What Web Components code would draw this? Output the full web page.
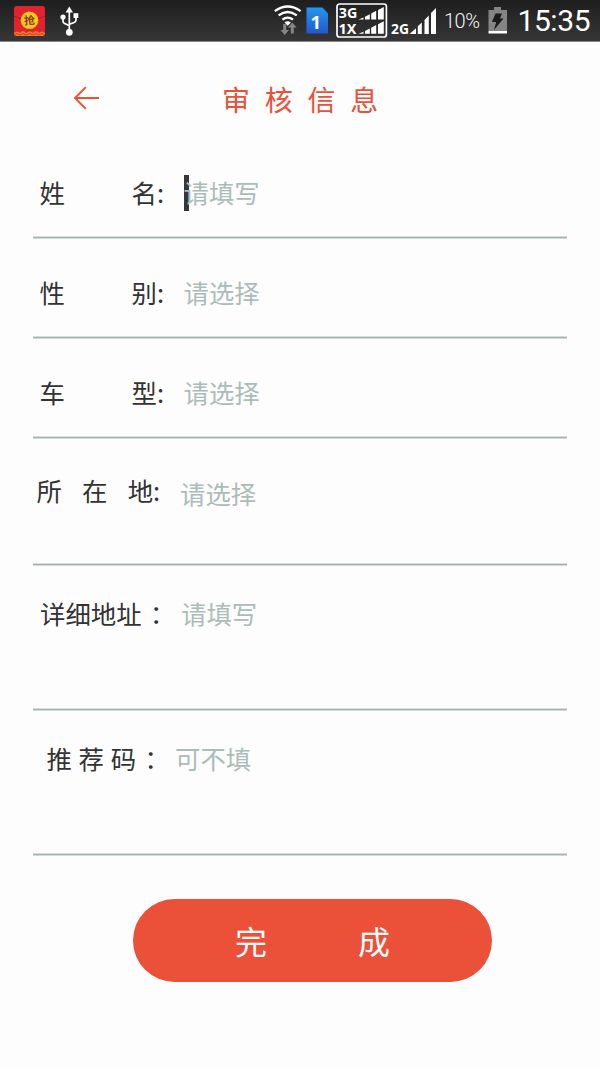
<!DOCTYPE html>
<html lang="zh-CN">
<head>
<meta charset="utf-8">
<title>审核信息</title>
<style>
html,body{margin:0;padding:0;background:#fdfdfd}
body{font-family:"Noto Sans CJK SC","Noto Sans",sans-serif;color:#333}
</style>
</head>
<body>
<audit-page></audit-page>
<script>
const define = (name, html) => {
  const t = document.createElement('template');
  t.innerHTML = html;
  customElements.define(name, class extends HTMLElement {
    constructor() {
      super();
      this.attachShadow({ mode: 'open' }).append(t.content.cloneNode(true));
    }
  });
};

define('status-bar', `
<style>
:host{display:flex;box-sizing:border-box;height:42px;background:linear-gradient(#1e1e1e,#363636);border-bottom:1px solid #888;color:#fff}
svg{display:block;width:600px;height:41px}
.b{font:700 13.5px "Noto Sans",sans-serif}
.r{font-family:Roboto,sans-serif}
</style>
<svg viewBox="0 0 600 41" fill="#fff">
  <defs><linearGradient id="sim" x1="0" y1="0" x2="0" y2="1"><stop stop-color="#2497ed"/><stop offset="1" stop-color="#2158cf"/></linearGradient>
  <clipPath id="env"><rect x="14" y="6" width="31" height="30" rx="3"/></clipPath></defs>
  <g clip-path="url(#env)">
    <rect x="14" y="6" width="31" height="30" fill="#e2232f"/>
    <path d="M14 16 Q30 24 45 16" stroke="#b91824" fill="none"/>
    <path d="M14 33q3-3 6 0q3-4 6 0q4-3 7 0q3-4 6 0q3-3 6 0v4H14z" fill="#ef7a2c"/>
    <path d="M14 35q3-3 6 0q3-3 6 0q4-3 7 0q3-3 6 0q3-3 6 0" stroke="#d63a24" fill="none"/>
  </g>
  <circle cx="29.5" cy="20.3" r="8.8" fill="#fbcb18"/>
  <text x="24" y="24.5" font-size="11" font-weight="700" fill="#8b3b12" transform="rotate(-4 29 20)">抢</text>
  <g stroke="#fff" stroke-width="1.7" fill="none"><path d="M69.3 11V32M63 17v4.2q0 1.8 1.8 2.4l4.5 2.2M76 16v4q0 1.8-1.8 2.5l-4.9 1.8"/></g>
  <path d="M69.3 6.5 73 12.5H65.6z"/><circle cx="69.3" cy="32.3" r="3.4"/><circle cx="63" cy="17" r="2.6"/><rect x="73.5" y="13.2" width="4.8" height="4.8"/>
  <g fill="none" stroke="#fff" stroke-width="2.3"><path d="M274.8 11.1q12.9-9.2 25.8 0M278.6 15.4q9.1-6.8 18.2 0M282.4 19.7q5.3-4.2 10.6 0"/></g>
  <path d="M284.5 22.5q3.2-2.6 6.4 0l-3.2 3.2z"/>
  <g fill="#858585"><path d="M283.2 24h3v6h2.8l-4.3 5-4.3-5h2.8zM290.8 33.5h3v-6h2.8l-4.3-5-4.3 5h2.8z"/></g>
  <path d="M306.5 7.5H322.5L328 13.5V33.5H306.5z" fill="url(#sim)"/>
  <text x="310.5" y="28.7" font-family="Noto Sans" font-weight="700" font-size="18.5">1</text>
  <rect x="337" y="4" width="49.4" height="33" rx="2.5" fill="none" stroke="#fff" stroke-width="1.7"/>
  <text class="b" x="338.8" y="17.5" textLength="18.5" lengthAdjust="spacingAndGlyphs">3G</text>
  <text class="b" x="338.5" y="34" textLength="18" lengthAdjust="spacingAndGlyphs">1X</text>
  <path id="mini" d="M358.5 19.5 363.5 17.4V19.5zM365 16.7 369.8 14.2V19.5H365zM371.2 13.5 376.2 10.8V19.5H371.2zM378 10 383.8 7V19.5H378z"/>
  <use href="#mini" y="14.3"/>
  <text class="b" x="391" y="34" textLength="18" lengthAdjust="spacingAndGlyphs">2G</text>
  <path d="M409.5 34 416 28.2V34zM417.8 26.3 421.8 22.5V34H417.8zM424.5 20 428.8 15.5V34H424.5zM431 13 436 8V34H431z"/>
  <text class="r" x="444" y="28.3" font-size="20" font-weight="300" fill="#f4f4f4" textLength="36">10%</text>
  <path d="M494 7h7v3h6v21H488.5V10H494z" fill="#858585"/><rect x="488.5" y="31" width="18.5" height="2.5"/>
  <path d="M495.5 13.5h6.5l-2 5h3.5l-9.5 11.5 2.2-8H492z" fill="#1b1b1b"/>
  <text class="r" x="517.5" y="31" font-size="30" textLength="73">15:35</text>
</svg>`);

define('page-header', `
<style>
:host{display:grid;grid-template-columns:222px 1fr;height:97px;box-sizing:border-box;padding-top:35px;color:#eb5038}
svg{margin:8px 0 0 73px;width:28px;height:26px}
h1{margin:0;font:400 28px/44px "Noto Sans CJK SC",sans-serif;word-spacing:8.5px;white-space:nowrap}
</style>
<svg viewBox="0 0 28 26" fill="none" stroke="currentColor" stroke-width="1.9"><path d="M26 13H2M12.8 2.2 2 13 12.8 23.8"/></svg>
<h1><slot></slot></h1>`);

define('form-row', `
<style>
:host{display:flex;box-sizing:border-box;height:var(--h,100px);margin:0 33px;background:linear-gradient(#d6dddc 1px,#a3b3b1 1px 2px,#d2dad9 2px) bottom/100% 3px no-repeat;padding-top:var(--t,35px);font-size:25.4px;line-height:36px;white-space:nowrap}
.label{box-sizing:border-box;width:var(--w,150.5px);padding-left:var(--l,6.5px);word-spacing:var(--gap,61px)}
.value{color:#acbcb9;margin-top:var(--dy,0);isolation:isolate}
</style>
<div class="label"><slot></slot></div><div class="value"><slot name="value"></slot></div>`);

define('text-caret', `
<style>:host{display:inline-block;width:5px;height:36px;margin-right:-5px;background:#333739;position:relative;top:1px;z-index:-1;vertical-align:top}</style>`);

define('full-colon', `
<style>:host{display:inline-block;font-family:"Noto Sans CJK TC",sans-serif;margin:1px 0 0 2px;vertical-align:top}</style><span lang="zh-TW"><slot></slot></span>`);

define('submit-button', `
<style>
:host{display:block;margin:42.5px 0 0 133.3px;width:358.4px}
button{display:block;width:100%;height:83.5px;border:0;border-radius:42px;padding:0 0 0;background:#eb5038;color:#fff;font:400 32px/44px "Noto Sans CJK SC",sans-serif;word-spacing:84px}
</style>
<button><slot></slot></button>`);

define('audit-page', `
<style>
:host{display:flex;flex-direction:column;height:1067px;overflow:hidden;background:#fdfdfd}
.place{--h:127px;--t:33px;--l:3.5px;--w:147px;--gap:14.5px;--dy:3px}
.addr{--h:145px;--t:29px;--l:7px;--w:148px}
.code{--h:145px;--t:29px;--l:13.5px;--w:142px;--gap:1px}
</style>
<status-bar></status-bar>
<page-header>审 核 信 息</page-header>
<form-row>姓 名:<span slot="value"><text-caret></text-caret>请填写</span></form-row>
<form-row>性 别:<span slot="value">请选择</span></form-row>
<form-row>车 型:<span slot="value">请选择</span></form-row>
<form-row class="place">所 在 地:<span slot="value">请选择</span></form-row>
<form-row class="addr">详细地址<full-colon>：</full-colon><span slot="value">请填写</span></form-row>
<form-row class="code">推 荐 码<full-colon>：</full-colon><span slot="value">可不填</span></form-row>
<submit-button>完 成</submit-button>`);
</script>
</body>
</html>
